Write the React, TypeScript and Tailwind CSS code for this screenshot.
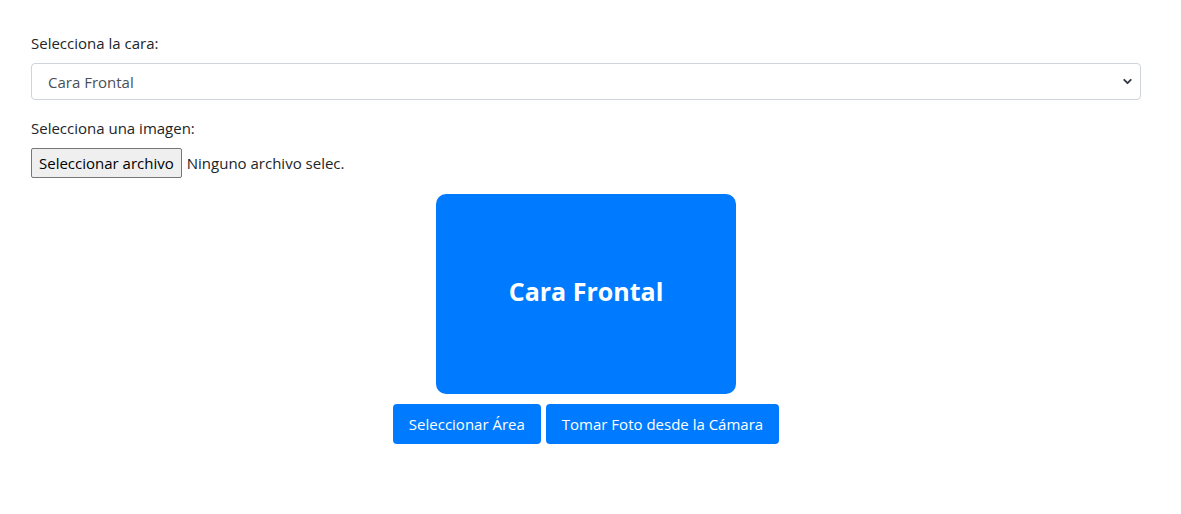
import { ChevronDown } from "lucide-react"

export default function App() {
  return (
    <div className="min-h-[514px] bg-white text-[#212529] font-['Open_Sans',sans-serif] text-[15px] leading-6">
      <div className="w-[1110px] ml-[31px] pt-[31px]">
        <div className="mb-4">
          <label className="block mb-2">Selecciona la cara:</label>
          <div className="relative h-[37px] border border-[#ced4da] rounded-[4px] flex items-center px-4 text-[#495057]">
            <span>Cara Frontal</span>
            <ChevronDown className="absolute right-[6px] top-[11px] w-[13px] h-[13px] text-[#343a40]" strokeWidth={3.5} />
          </div>
        </div>

        <div className="mb-4">
          <label className="block mb-2">Selecciona una imagen:</label>
          <div className="flex items-center">
            <button className="h-[30px] px-[7px] bg-[#efefef] border border-[#767676] rounded-[2px] text-black">
              Seleccionar archivo
            </button>
            <span className="ml-[5px]">Ninguno archivo selec.</span>
          </div>
        </div>

        <div className="flex flex-col items-center">
          <div className="w-[300px] h-[200px] bg-[#007bff] rounded-[10px] flex items-center justify-center pb-[6px]">
            <h2 className="text-white text-[25px] font-bold">Cara Frontal</h2>
          </div>
          <div className="flex gap-[5px] mt-[10px]">
            <button className="h-[40px] px-4 bg-[#007bff] text-white rounded-[4px]">Seleccionar Área</button>
            <button className="h-[40px] px-4 bg-[#007bff] text-white rounded-[4px]">Tomar Foto desde la Cámara</button>
          </div>
        </div>
      </div>
    </div>
  )
}
